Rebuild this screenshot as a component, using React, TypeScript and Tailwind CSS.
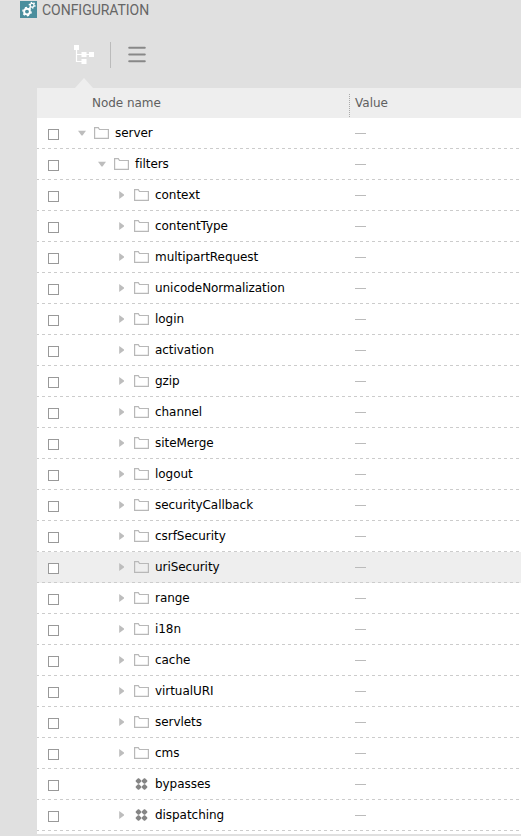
import React from 'react';

type Row = { name: string; depth: number; kind: 'folder' | 'node'; arrow: 'down' | 'right' | 'none' };

const folder = (name: string): Row => ({ name, depth: 2, kind: 'folder', arrow: 'right' });

const rows: Row[] = [
  { name: 'server', depth: 0, kind: 'folder', arrow: 'down' },
  { name: 'filters', depth: 1, kind: 'folder', arrow: 'down' },
  folder('context'),
  folder('contentType'),
  folder('multipartRequest'),
  folder('unicodeNormalization'),
  folder('login'),
  folder('activation'),
  folder('gzip'),
  folder('channel'),
  folder('siteMerge'),
  folder('logout'),
  folder('securityCallback'),
  folder('csrfSecurity'),
  folder('uriSecurity'),
  folder('range'),
  folder('i18n'),
  folder('cache'),
  folder('virtualURI'),
  folder('servlets'),
  folder('cms'),
  { name: 'bypasses', depth: 2, kind: 'node', arrow: 'none' },
  { name: 'dispatching', depth: 2, kind: 'node', arrow: 'right' },
];

const indents = ['pl-[19px]', 'pl-[39px]', 'pl-[59px]'];

function Arrow({ dir }: { dir: Row['arrow'] }) {
  return (
    <svg className="h-[10px] w-4 shrink-0" viewBox="0 0 16 10" fill="#bdbdbd">
      {dir === 'down' && <path d="M0 2.8H8L4.5 7.5H3.5Z" />}
      {dir === 'right' && <path d="M1.2 1L6 4.5V5.5L1.2 9Z" />}
    </svg>
  );
}

function FolderIcon() {
  return (
    <svg className="h-3 w-[21px] shrink-0" viewBox="0 0 21 12" fill="none" stroke="#b8b8b8" strokeWidth="1.2">
      <path d="M.6 11.4V.6H4.3L5.5 2.5H14.4V11.4Z" />
    </svg>
  );
}

function NodeIcon() {
  return (
    <svg className="h-3 w-[21px] shrink-0" viewBox="0 0 21 12" fill="#858585">
      {[[4.5, 3], [10.5, 3], [4.5, 9], [10.5, 9]].map(([x, y]) => (
        <path key={`${x}-${y}`} d={`M${x - 0.5} ${y - 2.8}h1l2.3 2.3v1l-2.3 2.3h-1l-2.3-2.3v-1Z`} />
      ))}
    </svg>
  );
}

function Gear({ x, y, r, w, teeth }: { x: number; y: number; r: number; w: number; teeth: number }) {
  return (
    <g fill="none" stroke="#fff">
      <circle cx={x} cy={y} r={r} strokeWidth={w} />
      <circle cx={x} cy={y} r={r + w / 2 + 0.3} strokeWidth="1.4" pathLength={teeth * 2} strokeDasharray="1 1" />
    </g>
  );
}

export default function App() {
  return (
    <div className="h-[836px] w-[521px] overflow-hidden bg-[#e0e0e0] font-['DejaVu_Sans',sans-serif] text-[12px] text-black">
      <header className="flex h-5 items-start pl-5">
        <svg className="mt-px h-[17px] w-[17px]" viewBox="0 0 17 17">
          <path fill="#4b8e9d" d="M0 0h17v17H0z" />
          <Gear x={7} y={10.6} r={2.9} w={1.9} teeth={6} />
          <Gear x={12.1} y={4.2} r={1.9} w={1.2} teeth={6} />
        </svg>
        <h1 className="ml-[5px] whitespace-nowrap font-['Roboto',sans-serif] text-[14px] font-normal leading-5 tracking-[-0.03px] text-[#666]">CONFIGURATION</h1>
      </header>
      <nav className="flex h-[58px] items-start pl-[74px] pt-[22px]">
        <svg className="mt-[3px] h-5 w-5" viewBox="0 0 20 20">
          <path d="M2.5 4V16.5H8M2.5 9.5H16" fill="none" stroke="#fff" strokeWidth="1.2" />
          <path d="M0 0h5v5H0zM7.5 7h5v5h-5zM15 7h5v5h-5zM7.5 14h5v5h-5z" fill="#fff" />
        </svg>
        <div className="ml-4 h-[26px] w-px bg-[#bbb]" />
        <svg className="ml-[17px] mt-1 h-[17px] w-[18px]" viewBox="0 0 18 17" stroke="#888" strokeWidth="2" strokeLinecap="round">
          <path d="M1.2 1.8H16.8M1.2 8.5H16.8M1.2 15.2H16.8" />
        </svg>
      </nav>
      <svg className="ml-[75px] h-[10px] w-[18px]" viewBox="0 0 18 10"><path d="M0 10L9 0L18 10Z" fill="#eee" /></svg>
      <main className="ml-[37px] h-[746px] bg-white">
        <div className="flex h-[30px] bg-[#eee] leading-[30px] text-[#606060]">
          <div className="w-[312px] pl-[55px] tracking-[-0.05px]">Node name</div>
          <div className="mt-[6px] h-[23px] border-l border-dotted border-[#aaa] pl-[5px] leading-[18px]">Value</div>
        </div>
        {rows.map((row) => (
          <div key={row.name} className={`relative flex h-[31px] ${row.name === 'uriSecurity' ? 'bg-[#eee]' : ''}`}>
            <span className="ml-[11px] mt-[11px] h-[11px] w-[11px] shrink-0 border border-[#999] bg-white" />
            <div className={`flex h-[30px] w-[296px] items-center ${indents[row.depth]}`}>
              <Arrow dir={row.arrow} />
              {row.kind === 'folder' ? <FolderIcon /> : <NodeIcon />}
              <span className="whitespace-nowrap leading-[18px] tracking-[-0.05px]">{row.name}</span>
            </div>
            <span className="mt-[15px] h-px w-[11px] bg-[#bbb]" />
            <i className="absolute inset-x-0 bottom-0 h-px bg-[repeating-linear-gradient(90deg,#ccc_0_2px,transparent_2px_5px,#ccc_5px_6px)]" />
          </div>
        ))}
      </main>
    </div>
  );
}
